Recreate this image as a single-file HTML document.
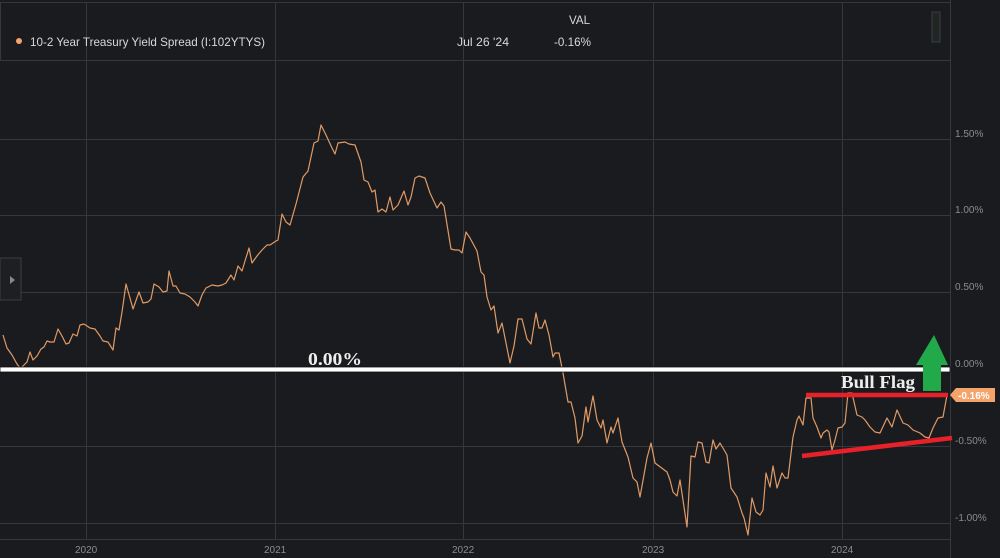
<!DOCTYPE html>
<html><head><style>
body{margin:0;background:#1a1b1e;width:1000px;height:558px;overflow:hidden;font-family:"Liberation Sans",sans-serif}
</style></head><body>
<svg width="1000" height="558" viewBox="0 0 1000 558" xmlns="http://www.w3.org/2000/svg" style="position:absolute;left:0;top:0">
<rect width="1000" height="558" fill="#1a1b1e"/>
<g stroke="#35373b" stroke-width="1">
<line x1="86.5" y1="2" x2="86.5" y2="539"/><line x1="275.5" y1="2" x2="275.5" y2="539"/><line x1="463.5" y1="2" x2="463.5" y2="539"/><line x1="653.5" y1="2" x2="653.5" y2="539"/><line x1="842.5" y1="2" x2="842.5" y2="539"/>
<line x1="0" y1="139.5" x2="950" y2="139.5"/><line x1="0" y1="215.5" x2="950" y2="215.5"/><line x1="0" y1="292.5" x2="950" y2="292.5"/><line x1="0" y1="446.5" x2="950" y2="446.5"/><line x1="0" y1="523.5" x2="950" y2="523.5"/>
<line x1="0" y1="539.5" x2="950" y2="539.5"/>
<line x1="950.5" y1="0" x2="950.5" y2="558"/>
<rect x="0.5" y="2.5" width="950" height="58" fill="none"/>
</g>
<rect x="932" y="12" width="8" height="30" fill="#202624" stroke="#3a3d40"/>
<rect x="0" y="258" width="21" height="42" fill="#1e1f22" stroke="#3a3d40"/>
<path d="M10 276 L15 280 L10 284Z" fill="#888"/>
<circle cx="19" cy="41" r="3" fill="#f4a46a"/>
<g fill="#d8d8d8" font-size="12">
<text x="30" y="46" textLength="235" lengthAdjust="spacingAndGlyphs">10-2 Year Treasury Yield Spread (I:102YTYS)</text>
<text x="457" y="46" textLength="52" lengthAdjust="spacingAndGlyphs">Jul 26 '24</text>
<text x="554" y="46" textLength="37" lengthAdjust="spacingAndGlyphs">-0.16%</text>
<text x="569" y="24" textLength="21" lengthAdjust="spacingAndGlyphs">VAL</text>
</g>
<g fill="#8a8c90" font-size="10">
<text x="955" y="137">1.50%</text><text x="955" y="213">1.00%</text><text x="955" y="290">0.50%</text><text x="955" y="367">0.00%</text><text x="955" y="444">-0.50%</text><text x="955" y="521">-1.00%</text>
<text x="75" y="553">2020</text><text x="264" y="553">2021</text><text x="452" y="553">2022</text><text x="642" y="553">2023</text><text x="831" y="553">2024</text>
</g>
<polyline fill="none" stroke="#e09a66" stroke-width="1.2" stroke-linejoin="round" points="3,335 7,348 12,355 17,364 20,368 22,367 27,362 30,352 33,360 37,356 41,349 44,347 47,341 50,342 54,342 58,329 62,336 66,344 69,343 73,334 77,336 80,325 84,324 90,328 95,329 100,336 103,341 108,342 113,350 116,328 119,330 122,312 126,284 130,298 133,309 139,292 143,303 148,302 151,299 154,284 159,287 163,292 167,291 169,271 173,286 176,286 180,293 185,294 190,297 195,302 198,306 202,295 206,288 212,285 218,286 222,285 226,283 231,275 234,280 238,266 242,271 245,261 249,248 252,263 257,256 262,250 267,245 270,245 276,241 278,240 282,214 286,222 290,225 296,204 303,177 308,171 314,143 318,141 321,125 326,135 332,148 335,154 338,143 345,142 349,144 355,145 361,162 364,180 368,182 372,192 375,190 378,212 382,209 386,212 390,197 393,210 398,205 404,191 408,205 411,197 415,178 419,176 425,178 430,193 437,208 441,202 444,206 451,249 455,250 459,250 462,253 466,232 470,238 477,251 481,272 484,275 487,297 491,310 494,306 498,333 502,323 506,343 510,363 514,346 518,319 522,319 527,339 531,344 536,313 539,328 542,328 545,320 549,335 553,357 555,353 559,353 563,373 568,402 571,402 575,418 578,443 582,436 586,407 588,422 593,396 597,420 601,428 603,420 607,443 611,427 613,433 618,418 622,442 628,457 633,478 637,482 640,497 647,458 651,443 655,463 667,472 670,480 673,492 677,496 680,480 687,527 691,456 695,457 698,442 702,443 706,462 709,463 713,440 716,449 720,443 727,455 731,488 737,497 742,513 744,518 748,535 752,498 756,512 760,515 763,510 766,473 770,487 773,466 777,488 782,473 785,478 788,478 793,437 797,420 799,416 803,425 806,398 811,398 813,418 817,427 821,438 823,433 827,430 829,432 832,450 835,440 838,428 842,427 845,423 848,393 852,393 857,415 862,417 865,420 870,427 875,432 880,433 887,418 892,427 897,410 903,423 908,425 913,430 920,433 925,437 929,438 933,428 938,418 943,417 947,395"/>
<rect x="0" y="367" width="950" height="5" fill="#fff" stroke="#111" stroke-width="0.8"/>
<line x1="806" y1="395" x2="948" y2="395" stroke="#e8202a" stroke-width="4.5"/>
<line x1="802" y1="456" x2="952" y2="438" stroke="#e8202a" stroke-width="4.5"/>
<path d="M934 335 L948 365 L941 365 L941 391 L923 391 L923 365 L916 365Z" fill="#22a94a"/>
<g font-family="'Liberation Serif',serif" font-weight="bold" fill="#eee">
<text x="308" y="365" font-size="18" textLength="54" lengthAdjust="spacingAndGlyphs">0.00%</text>
<text x="841" y="388" font-size="18" textLength="74" lengthAdjust="spacingAndGlyphs">Bull Flag</text>
</g>
<path d="M950 395 L956 388 L995 388 L995 402 L956 402Z" fill="#f4a46a"/>
<text x="958" y="399" font-size="10" font-weight="bold" fill="#fff">-0.16%</text>
</svg>
</body></html>
